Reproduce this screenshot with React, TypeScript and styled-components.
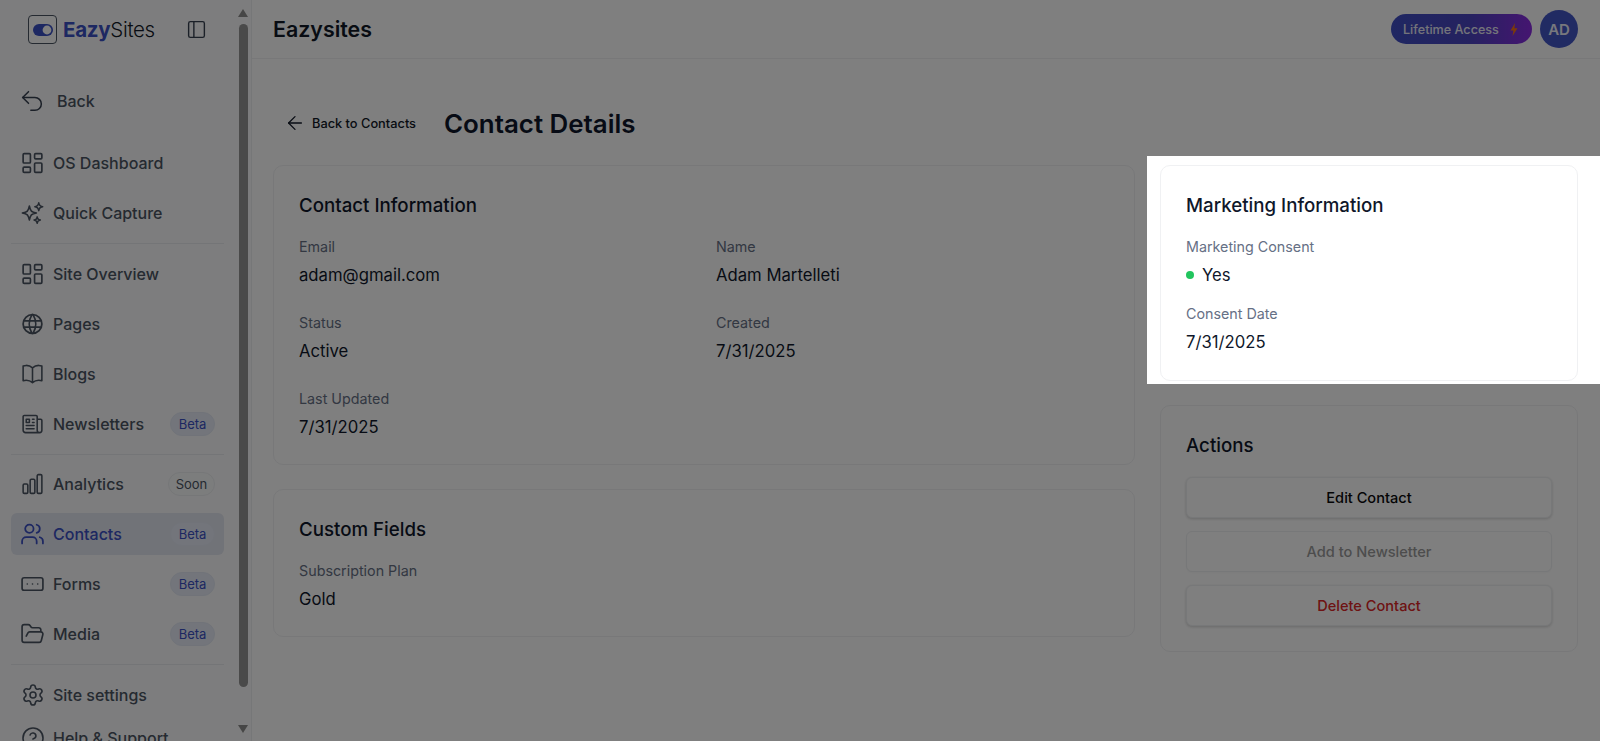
import React from "react";
import styled, { createGlobalStyle } from "styled-components";
import {
  ArrowLeft,
  CircleHelp,
  FolderOpen,
  LayoutDashboard,
  PanelLeft,
  RectangleEllipsis,
  Settings,
  Undo2,
  Users,
} from "lucide-react";
import {
  HiOutlineBookOpen,
  HiOutlineChartBar,
  HiOutlineNewspaper,
  HiOutlineSparkles,
} from "react-icons/hi2";
import { TbWorld } from "react-icons/tb";

const GlobalStyle = createGlobalStyle`
  html, body {
    margin: 0;
    height: 100%;
    overflow: hidden;
    background: #fff;
    font-family: Inter, "Liberation Sans", sans-serif;
    color: #0f172a;
  }
  * { box-sizing: border-box; }
`;

type BadgeKind = "beta" | "soon";

interface NavEntry {
  label: string;
  icon: React.ReactNode;
  badge?: BadgeKind;
  active?: boolean;
}

const groups: NavEntry[][] = [
  [
    { label: "OS Dashboard", icon: <LayoutDashboard size={28} strokeWidth={1.6} /> },
    { label: "Quick Capture", icon: <HiOutlineSparkles size={26} /> },
  ],
  [
    { label: "Site Overview", icon: <LayoutDashboard size={28} strokeWidth={1.6} /> },
    { label: "Pages", icon: <TbWorld size={26} strokeWidth={1.7} /> },
    { label: "Blogs", icon: <HiOutlineBookOpen size={26} /> },
    { label: "Newsletters", icon: <HiOutlineNewspaper size={26} />, badge: "beta" },
  ],
  [
    { label: "Analytics", icon: <HiOutlineChartBar size={26} />, badge: "soon" },
    { label: "Contacts", icon: <Users size={26} strokeWidth={1.7} />, badge: "beta", active: true },
    { label: "Forms", icon: <RectangleEllipsis size={26} strokeWidth={1.6} />, badge: "beta" },
    { label: "Media", icon: <FolderOpen size={26} strokeWidth={1.6} />, badge: "beta" },
  ],
  [
    { label: "Site settings", icon: <Settings size={24} strokeWidth={1.6} /> },
    { label: "Help & Support", icon: <CircleHelp size={24} strokeWidth={1.6} /> },
  ],
];

const App: React.FC = () => {
  return (
    <Page>
      <GlobalStyle />
      <Sidebar>
        <SidebarBody>
          <LogoRow>
            <LogoMark>
              <svg width="20" height="12" viewBox="0 0 20 12">
                <rect width="20" height="12" rx="6" fill="#3b50c4" />
                <circle cx="14" cy="6" r="4.4" fill="#fff" />
              </svg>
            </LogoMark>
            <LogoText>
              <b>Eazy</b>Sites
            </LogoText>
            <PanelToggle>
              <PanelLeft size={21} strokeWidth={1.6} />
            </PanelToggle>
          </LogoRow>
          <BackItem>
            <Undo2 size={28} strokeWidth={1.3} />
            <span>Back</span>
          </BackItem>
          {groups.map((group, i) => (
            <React.Fragment key={i}>
              {i > 0 && <Divider />}
              <NavGroup $tight={i === groups.length - 1}>
                {group.map((entry) => (
                  <NavItem key={entry.label} $active={entry.active}>
                    <NavIcon>{entry.icon}</NavIcon>
                    <NavLabel>{entry.label}</NavLabel>
                    {entry.badge && (
                      <Badge $kind={entry.badge}>
                        {entry.badge === "beta" ? "Beta" : "Soon"}
                      </Badge>
                    )}
                  </NavItem>
                ))}
              </NavGroup>
            </React.Fragment>
          ))}
        </SidebarBody>
        <ScrollRail>
          <ArrowUp />
          <ScrollThumb />
          <ArrowDown />
        </ScrollRail>
      </Sidebar>

      <Main>
        <TopBar>
          <SiteName>Eazysites</SiteName>
          <TopActions>
            <LifetimeButton>
              Lifetime Access
              <svg width="8" height="13" viewBox="0 0 8 13">
                <path d="M5 0 0.5 7.4H3.4L2.6 13 7.5 5.2H4.4Z" fill="#f97316" />
              </svg>
            </LifetimeButton>
            <Avatar>AD</Avatar>
          </TopActions>
        </TopBar>

        <Content>
          <TitleRow>
            <BackLink>
              <ArrowLeft size={22} strokeWidth={1.4} />
              Back to Contacts
            </BackLink>
            <PageTitle>Contact Details</PageTitle>
          </TitleRow>

          <Columns>
            <Column>
              <Card $bottom={23}>
                <CardTitle>Contact Information</CardTitle>
                <FieldGrid>
                  <Field>
                    <FieldLabel>Email</FieldLabel>
                    <FieldValue>adam@gmail.com</FieldValue>
                  </Field>
                  <Field>
                    <FieldLabel>Name</FieldLabel>
                    <FieldValue>Adam Martelleti</FieldValue>
                  </Field>
                  <Field>
                    <FieldLabel>Status</FieldLabel>
                    <FieldValue>Active</FieldValue>
                  </Field>
                  <Field>
                    <FieldLabel>Created</FieldLabel>
                    <FieldValue>7/31/2025</FieldValue>
                  </Field>
                  <Field>
                    <FieldLabel>Last Updated</FieldLabel>
                    <FieldValue>7/31/2025</FieldValue>
                  </Field>
                </FieldGrid>
              </Card>
              <Card $bottom={23}>
                <CardTitle>Custom Fields</CardTitle>
                <FieldGrid>
                  <Field>
                    <FieldLabel>Subscription Plan</FieldLabel>
                    <FieldValue>Gold</FieldValue>
                  </Field>
                </FieldGrid>
              </Card>
            </Column>

            <Column>
              <Card>
                <CardTitle>Marketing Information</CardTitle>
                <FieldGrid $single>
                  <Field>
                    <FieldLabel>Marketing Consent</FieldLabel>
                    <FieldValue>
                      <ConsentDot />
                      Yes
                    </FieldValue>
                  </Field>
                  <Field>
                    <FieldLabel>Consent Date</FieldLabel>
                    <FieldValue>7/31/2025</FieldValue>
                  </Field>
                </FieldGrid>
              </Card>
              <Card>
                <CardTitle>Actions</CardTitle>
                <ActionList>
                  <ActionButton>Edit Contact</ActionButton>
                  <ActionButton $variant="disabled">Add to Newsletter</ActionButton>
                  <ActionButton $variant="danger">Delete Contact</ActionButton>
                </ActionList>
              </Card>
            </Column>
          </Columns>
        </Content>
      </Main>

      <Spotlight />
    </Page>
  );
};

export default App;

const Page = styled.div`
  display: flex;
  width: 1600px;
  height: 741px;
  overflow: hidden;
`;

const Sidebar = styled.aside`
  display: flex;
  flex: none;
  width: 252px;
  height: 741px;
  background: #fbfbfc;
  border-right: 1px solid #eceef1;
`;

const SidebarBody = styled.div`
  flex: none;
  width: 235px;
  padding: 0 0 0 11px;
  overflow: hidden;
`;

const LogoRow = styled.div`
  display: flex;
  align-items: center;
  height: 59px;
  margin-bottom: 21px;
  padding-left: 17px;
`;

const LogoMark = styled.div`
  display: flex;
  align-items: center;
  justify-content: center;
  width: 29px;
  height: 29px;
  border: 1px solid #4b5563;
  border-radius: 4px;
  background: #fff;
`;

const LogoText = styled.div`
  margin-left: 6px;
  font-size: 20.5px;
  font-weight: 300;
  letter-spacing: -0.3px;
  color: #111827;

  b {
    font-weight: 700;
    color: #3b50c4;
  }
`;

const PanelToggle = styled.div`
  display: flex;
  margin-left: 31px;
  color: #374151;
`;

const BackItem = styled.div`
  display: flex;
  align-items: center;
  gap: 11px;
  height: 42px;
  margin-bottom: 20px;
  padding-left: 7px;
  font-size: 16px;
  font-weight: 500;
  color: #4b5563;

  svg {
    color: #374151;
  }
`;

const NavGroup = styled.div<{ $tight?: boolean }>`
  display: flex;
  flex-direction: column;
  gap: ${(p) => (p.$tight ? "1px" : "8px")};
  width: 213px;
`;

const Divider = styled.div`
  width: 213px;
  height: 1px;
  margin: 9px 0 8.5px;
  background: #e9ebee;
`;

const NavItem = styled.div<{ $active?: boolean }>`
  display: flex;
  flex: none;
  align-items: center;
  height: 42px;
  padding: 0 9px 0 9px;
  border-radius: 6px;
  background: ${(p) => (p.$active ? "#e3e6f0" : "transparent")};
  color: ${(p) => (p.$active ? "#3b50c4" : "#4b5563")};
`;

const NavIcon = styled.span`
  display: flex;
  flex: none;
  align-items: center;
  justify-content: center;
  width: 25px;
  margin-right: 8px;
`;

const NavLabel = styled.span`
  flex: 1;
  font-size: 16px;
  font-weight: 500;
  white-space: nowrap;
`;

const Badge = styled.span<{ $kind: BadgeKind }>`
  display: flex;
  align-items: center;
  justify-content: center;
  width: ${(p) => (p.$kind === "beta" ? "45px" : "47px")};
  height: 24px;
  border-radius: 12px;
  font-size: 13px;
  font-weight: 400;
  background: ${(p) => (p.$kind === "beta" ? "#e6ebf7" : "#f9fafb")};
  border: 1px solid ${(p) => (p.$kind === "beta" ? "#e2e7f3" : "#eceef1")};
  color: ${(p) => (p.$kind === "beta" ? "#3b50c4" : "#4b5563")};
`;

const ScrollRail = styled.div`
  display: flex;
  flex: 1;
  flex-direction: column;
  align-items: center;
  padding: 9px 0 0;
`;

const ArrowUp = styled.div`
  width: 0;
  height: 0;
  border-left: 5px solid transparent;
  border-right: 5px solid transparent;
  border-bottom: 8px solid #8c8c8c;
`;

const ArrowDown = styled(ArrowUp)`
  border-bottom: 0;
  border-top: 8px solid #8c8c8c;
`;

const ScrollThumb = styled.div`
  width: 9px;
  height: 663px;
  margin: 7px 0 38px;
  border-radius: 5px;
  background: #949494;
`;

const Main = styled.main`
  display: flex;
  flex: 1;
  flex-direction: column;
  min-width: 0;
`;

const TopBar = styled.header`
  display: flex;
  flex: none;
  align-items: center;
  justify-content: space-between;
  height: 59px;
  padding: 0 22px 0 21px;
  border-bottom: 1px solid #f0f1f3;
`;

const SiteName = styled.h1`
  margin: 0;
  font-size: 21.4px;
  font-weight: 600;
  color: #111827;
`;

const TopActions = styled.div`
  display: flex;
  align-items: center;
  gap: 8px;
`;

const LifetimeButton = styled.div`
  display: flex;
  align-items: center;
  justify-content: space-between;
  width: 141px;
  height: 30px;
  padding: 0 14px 0 12px;
  border-radius: 15px;
  background: linear-gradient(90deg, #3f4ec4 0%, #4a45c0 55%, #8a2be2 100%);
  font-size: 12.6px;
  font-weight: 500;
  color: #e8e8f5;
`;

const Avatar = styled.div`
  display: flex;
  align-items: center;
  justify-content: center;
  width: 38px;
  height: 38px;
  border-radius: 50%;
  background: #4356c6;
  font-size: 15px;
  font-weight: 600;
  color: #eef0fa;
`;

const Content = styled.div`
  padding: 0 22px 0 21px;
`;

const TitleRow = styled.div`
  display: flex;
  align-items: center;
  height: 44px;
  margin: 42px 0 20px;
`;

const BackLink = styled.a`
  display: flex;
  align-items: center;
  gap: 6px;
  margin-left: 11px;
  font-size: 12.8px;
  font-weight: 500;
  color: #111827;
`;

const PageTitle = styled.h2`
  margin: 0 0 0 28px;
  font-size: 25.9px;
  font-weight: 600;
  color: #0f172a;
`;

const Columns = styled.div`
  display: grid;
  grid-template-columns: 862px 418px;
  gap: 25px;
`;

const Column = styled.div`
  display: flex;
  flex-direction: column;
  gap: 24px;
`;

const Card = styled.section<{ $bottom?: number }>`
  padding: 27px 25px ${(p) => p.$bottom ?? 24}px;
  border: 1px solid #f0f1f3;
  border-radius: 10px;
  background: #fff;
`;

const CardTitle = styled.h3`
  margin: 0 0 18px;
  font-size: 18.7px;
  line-height: 26px;
  font-weight: 500;
  color: #0f172a;
`;

const FieldGrid = styled.div<{ $single?: boolean }>`
  display: grid;
  grid-template-columns: ${(p) => (p.$single ? "1fr" : "1fr 1fr")};
  gap: ${(p) => (p.$single ? "15px" : "24px")} 24px;
`;

const Field = styled.div`
  display: flex;
  flex-direction: column;
  gap: 4px;
`;

const FieldLabel = styled.span`
  font-size: 14.3px;
  line-height: 20px;
  color: #667085;
`;

const FieldValue = styled.span`
  display: flex;
  align-items: center;
  font-size: 16.7px;
  line-height: 28px;
  color: #0f172a;
`;

const ConsentDot = styled.i`
  width: 8px;
  height: 8px;
  margin-right: 8px;
  border-radius: 50%;
  background: #22c55e;
`;

const ActionList = styled.div`
  display: flex;
  flex-direction: column;
  gap: 13px;
  margin-bottom: 1px;
`;

const ActionButton = styled.button<{ $variant?: "disabled" | "danger" }>`
  height: 41px;
  border: 1px solid #eef0f2;
  border-radius: 6px;
  background: #fff;
  box-shadow: ${(p) =>
    p.$variant === "disabled" ? "0 1px 2px rgba(0,0,0,0.03)" : "0 1px 3px rgba(0,0,0,0.18)"};
  font-family: inherit;
  font-size: 14.6px;
  font-weight: 500;
  color: ${(p) =>
    p.$variant === "disabled" ? "#9a9a9a" : p.$variant === "danger" ? "#dc2626" : "#09090b"};
`;

// tour highlight: dims the whole page except this hole
const Spotlight = styled.div`
  position: fixed;
  left: 1147px;
  top: 156px;
  width: 453px;
  height: 228px;
  box-shadow: 0 0 0 2000px rgba(0, 0, 0, 0.5);
  pointer-events: none;
`;
